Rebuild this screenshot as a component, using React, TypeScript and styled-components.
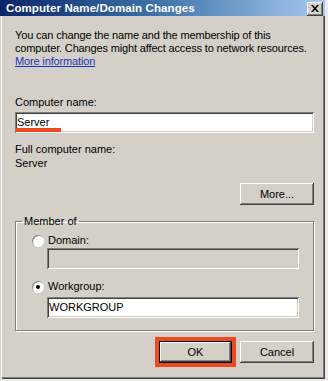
import React from 'react';
import styled, { createGlobalStyle } from 'styled-components';

const GlobalStyle = createGlobalStyle`
  html, body {
    margin: 0;
    padding: 0;
    background: #ecebe8;
  }
  body {
    font-family: "Liberation Sans", Arial, sans-serif;
    font-size: 11px;
    color: #000;
  }
`;

const Window = styled.div`
  width: 325px;
  height: 379px;
  box-sizing: border-box;
  background: #d4d0c8;
  display: flex;
  flex-direction: column;
  box-shadow: inset 1px 0 #d4d0c8, inset 2px 0 #fff, inset -1px -1px #404040, inset -2px -2px #808080;
`;

const TitleBar = styled.div`
  height: 16px;
  display: flex;
  align-items: center;
  justify-content: space-between;
  padding: 0 2px 0 6px;
  background: linear-gradient(90deg, #0a246a 0%, #3a6ea5 45%, #a6caf0 100%);
`;

const TitleText = styled.span`
  color: #fff;
  font-weight: bold;
  font-size: 11.5px;
  line-height: 16px;
  letter-spacing: 0.1px;
`;

const CloseButton = styled.div`
  width: 16px;
  height: 14px;
  margin-top: 1px;
  display: flex;
  align-items: center;
  justify-content: center;
  background: #d4d0c8;
  box-shadow: inset -1px -1px #404040, inset 1px 1px #fff, inset -2px -2px #808080;

  svg {
    width: 8px;
    height: 7px;
  }
`;

const Body = styled.div`
  padding: 0 11px 0 15px;
  display: flex;
  flex-direction: column;
`;

const Text = styled.div<{ $top: number }>`
  margin-top: ${(p) => p.$top}px;
  line-height: 13px;
  white-space: nowrap;
`;

const Description = styled(Text)`
  letter-spacing: -0.15px;
`;

const Link = styled.a`
  color: #1a33b8;
  text-decoration: underline;
`;

const TextField = styled.div<{ $top: number; $disabled?: boolean }>`
  margin-top: ${(p) => p.$top}px;
  height: 21px;
  box-sizing: border-box;
  position: relative;
  padding: 0 2px;
  line-height: 20px;
  background: ${(p) => (p.$disabled ? '#d4d0c8' : '#fff')};
  box-shadow: inset 1px 1px #808080, inset -1px -1px #fff, inset 2px 2px #404040, inset -2px -2px #d4d0c8;
`;

const Mark = styled.span`
  position: absolute;
  left: 1px;
  top: 16px;
  width: 45px;
  height: 4px;
  background: #ee4a1f;
`;

const Button = styled.div<{ $width: number }>`
  width: ${(p) => p.$width}px;
  height: 22px;
  box-sizing: border-box;
  display: flex;
  align-items: center;
  justify-content: center;
  background: #d4d0c8;
  box-shadow: inset -1px -1px #404040, inset 1px 1px #fff, inset -2px -2px #808080;
`;

const DefaultButton = styled(Button)`
  box-shadow: inset -1px -1px #000, inset 1px 1px #000, inset -2px -2px #404040, inset 2px 2px #fff, inset -3px -3px #808080;
  outline: 4px solid #ee4a1f;
  outline-offset: 0;
`;

const RightRow = styled.div<{ $top: number }>`
  margin-top: ${(p) => p.$top}px;
  display: flex;
  justify-content: flex-end;
  gap: 8px;
`;

const Group = styled.fieldset`
  margin: 10px 0 0 0;
  padding: 0 14px 12px 16px;
  border: 1px solid #808080;
  box-shadow: inset 1px 1px #fff, 1px 1px #fff;
  display: flex;
  flex-direction: column;
`;

const Legend = styled.legend`
  margin-left: -10px;
  padding: 0 2px;
  line-height: 13px;
`;

const RadioRow = styled.div<{ $top: number }>`
  margin-top: ${(p) => p.$top}px;
  display: flex;
  align-items: center;
  gap: 4px;
  line-height: 13px;
`;

const Radio = styled.span<{ $checked?: boolean }>`
  width: 12px;
  height: 12px;
  border-radius: 50%;
  background: #fff;
  position: relative;
  box-shadow: inset 1px 1px #808080, inset -1px -1px #fff, 0 0 0 0.5px #c8c4bc;

  &::after {
    content: '';
    display: ${(p) => (p.$checked ? 'block' : 'none')};
    position: absolute;
    left: 4px;
    top: 4px;
    width: 4px;
    height: 4px;
    border-radius: 50%;
    background: #000;
  }
`;

const Indented = styled.div`
  margin-left: 15px;
`;

export default function App() {
  return (
    <>
      <GlobalStyle />
      <Window>
        <TitleBar>
          <TitleText>Computer Name/Domain Changes</TitleText>
          <CloseButton>
            <svg viewBox="0 0 8 7">
              <path d="M0 0h2l2 2.2L6 0h2L5 3.5 8 7H6L4 4.8 2 7H0l3-3.5z" fill="#000" />
            </svg>
          </CloseButton>
        </TitleBar>
        <Body>
          <Description $top={13}>
            You can change the name and the membership of this
            <br />
            computer. Changes might affect access to network resources.
            <br />
            <Link>More information</Link>
          </Description>
          <Text $top={28}>Computer name:</Text>
          <TextField $top={3}>
            Server
            <Mark />
          </TextField>
          <Text $top={10}>Full computer name:</Text>
          <Text $top={1}>Server</Text>
          <RightRow $top={13}>
            <Button $width={74}>More...</Button>
          </RightRow>
          <Group>
            <Legend>Member of</Legend>
            <RadioRow $top={6}>
              <Radio />
              Domain:
            </RadioRow>
            <Indented>
              <TextField $top={1} $disabled />
            </Indented>
            <RadioRow $top={11}>
              <Radio $checked />
              Workgroup:
            </RadioRow>
            <Indented>
              <TextField $top={4}>WORKGROUP</TextField>
            </Indented>
          </Group>
          <RightRow $top={10}>
            <DefaultButton $width={73}>OK</DefaultButton>
            <Button $width={74}>Cancel</Button>
          </RightRow>
        </Body>
      </Window>
    </>
  );
}
